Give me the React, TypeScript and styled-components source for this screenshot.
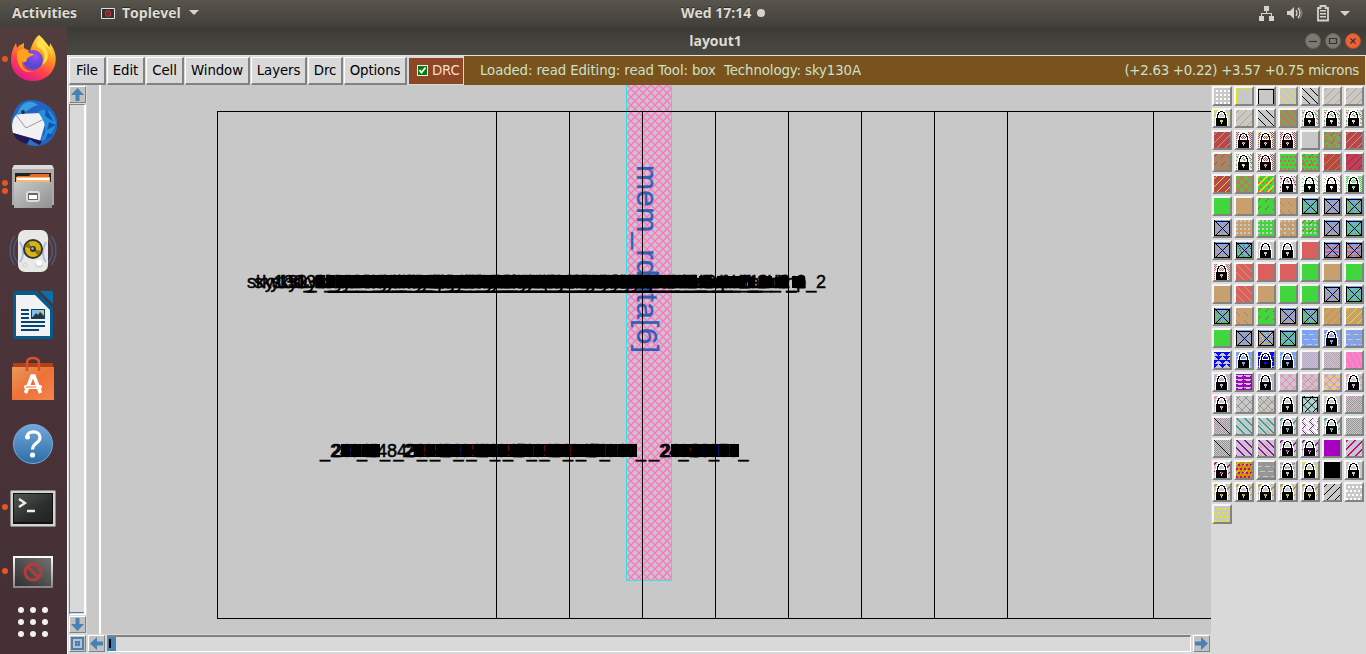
import React from "react";
import styled, { createGlobalStyle } from "styled-components";

const GlobalStyle = createGlobalStyle`
  * { box-sizing: border-box; }
  body { margin: 0; overflow: hidden; background: #d9d9d9; }
`;

const Desktop = styled.div`
  width: 1366px;
  height: 654px;
  display: flex;
  flex-direction: column;
  overflow: hidden;
  font-family: "DejaVu Sans", sans-serif;
`;

const TopBar = styled.header`
  height: 27px;
  flex: none;
  display: grid;
  grid-template-columns: 1fr auto 1fr;
  align-items: start;
  padding: 0 15px 0 12px;
  background: linear-gradient(#59554d, #403f3a);
  color: #dfdbd2;
  font: bold 14px/26px "Open Sans", sans-serif;
  text-shadow: 0 -1px 0 #2b2a27;
`;
const TopLeft = styled.div`
  display: flex;
  align-items: center;
  height: 26px;
`;
const BarText = styled.span<{ $w: number }>`
  width: ${(p) => p.$w}px;
  white-space: nowrap;
`;
const AppMark = styled.svg`
  margin: 0 7px 0 21px;
`;
const Clock = styled.div`
  display: flex;
  align-items: center;
  gap: 4px;
  height: 26px;
  margin-left: 83px;
`;
const ClockDot = styled.i`
  width: 8px;
  height: 8px;
  border-radius: 50%;
  background: #d5d2cc;
`;
const Tray = styled.div`
  display: flex;
  align-items: center;
  justify-content: flex-end;
  height: 26px;
`;

const Body = styled.div`
  flex: 1;
  display: flex;
  min-height: 0;
`;
const Dock = styled.nav`
  width: 67px;
  flex: none;
  display: flex;
  flex-direction: column;
  background: linear-gradient(#523c3e, #4b3439 50%, #432f34);
`;
const DockItem = styled.div<{ $h?: number }>`
  height: ${(p) => p.$h ?? 64}px;
  display: flex;
  align-items: center;
`;
const Marks = styled.span`
  width: 9px;
  display: flex;
  flex-direction: column;
  align-items: center;
  gap: 2px;
`;
const Mark = styled.i`
  width: 6px;
  height: 6px;
  border-radius: 50%;
  background: #e95420;
`;

const Win = styled.main`
  flex: 1;
  min-width: 0;
  display: flex;
  flex-direction: column;
  background: #d9d9d9;
`;
const TitleBar = styled.div`
  height: 28px;
  flex: none;
  display: grid;
  grid-template-columns: 1fr auto 1fr;
  align-items: start;
  padding: 0 5px 0 0;
  background: linear-gradient(#3b3a36, #4b4943);
  color: #dfdbd2;
  font: bold 14px/27px "Open Sans", sans-serif;
`;
const WinTitle = styled.span`
  grid-column: 2;
  margin-left: 3px;
`;
const WinButtons = styled.div`
  display: flex;
  justify-content: flex-end;
  gap: 4px;
  padding-top: 6px;
`;
const MenuRow = styled.div`
  height: 30px;
  flex: none;
  display: flex;
  border-top: 1px solid #e4e4e4;
  border-left: 1px solid #fff;
  padding: 0 1px;
  font-size: 13.33px;
`;
const MenuButton = styled.button<{ $w: number }>`
  width: ${(p) => p.$w}px;
  height: 28px;
  margin: 1px 1px 0 0;
  padding: 0;
  flex: none;
  background: #d9d9d9;
  border: 1px solid #fff;
  border-right: 2px solid #828282;
  border-bottom: 2px solid #828282;
  color: #000;
  font: 13.33px/24px "DejaVu Sans", sans-serif;
  letter-spacing: -0.1px;
  white-space: nowrap;
`;
const DrcToggle = styled.label`
  width: 56px;
  height: 28px;
  margin-top: 1px;
  flex: none;
  display: flex;
  align-items: center;
  gap: 4px;
  padding: 0 0 2px 8px;
  border: 1px solid #d9d9d9;
  background: #8e4726;
  color: #f5dcc8;
  letter-spacing: -0.2px;
`;
const Status = styled.div`
  flex: 1;
  display: flex;
  justify-content: space-between;
  align-items: center;
  padding: 0 6px 0 16px;
  background: #7a521e;
  color: #c9e2cd;
  white-space: pre;
`;
const Reading = styled.span<{ $track: number }>`
  letter-spacing: ${(p) => p.$track}px;
`;

const Work = styled.div`
  flex: 1;
  display: flex;
  min-height: 0;
`;
const Viewer = styled.section`
  width: 1144px;
  flex: none;
  display: flex;
  flex-direction: column;
  border-left: 1px solid #fff;
  background: #d9d9d9;
`;
const ViewerTop = styled.div`
  height: 549px;
  display: flex;
`;
const VScroll = styled.div`
  width: 19px;
  display: flex;
  flex-direction: column;
  padding: 1px 1px 1px 1px;
  gap: 1px;
`;
const ScrollButton = styled.span`
  width: 17px;
  height: 17px;
  flex: none;
  display: flex;
  align-items: center;
  justify-content: center;
  background: #c0c0c0;
  border: 1px solid #fff;
  border-right-color: #828282;
  border-bottom-color: #828282;
`;
const VTrough = styled.span`
  flex: 1;
  width: 17px;
  border: 1px solid #828282;
  border-right: 2px solid #fff;
  border-bottom: 1px solid #fff;
  display: flex;
  align-items: flex-end;
`;
const VThumb = styled.i`
  width: 14px;
  height: 1px;
  margin-bottom: 1px;
  background: #4682b4;
`;
const Gutter = styled.div`
  width: 14px;
  background: #c8c8c8;
  border-right: 2px solid #fff;
`;
const Drawing = styled.svg`
  width: 1110px;
  height: 549px;
  display: block;
  background: #c8c8c8;
`;
const HScroll = styled.div`
  height: 20px;
  display: flex;
  gap: 2px;
  padding: 1px;
`;
const HTrough = styled.span`
  flex: 1;
  height: 17px;
  display: flex;
  border: 1px solid #fff;
  border-top: 2px solid #828282;
  border-left: 1px solid #828282;
`;
const HThumb = styled.i`
  width: 8px;
  background: #4682b4;
  padding: 2px 0 3px 1px;
  &::before { content: ""; display: block; width: 2px; height: 9px; background: #000; }
`;

const Palette = styled.aside`
  flex: 1;
  display: grid;
  grid-template-columns: repeat(7, 20px);
  grid-auto-rows: 20px;
  gap: 2px;
  align-content: start;
  padding: 1px 0 0 1px;
`;
const Swatch = styled.span`
  border: 2px solid #f6f6f6;
  border-right: 2px solid #828282;
  border-bottom: 2px solid #828282;
  svg { display: block; }
`;

const C: Record<string, string> = {
  G: "#c8c8c8", W: "#ffffff", K: "#000000", Y: "#ebe60a", T: "#c8a070",
  N: "#a98463", g: "#42d63e", R: "#b8474d", r: "#dc5f5f", B: "#7ba4f8",
  D: "#0a0af0", P: "#a200c4", p: "#b9a0d6", k: "#ff78c8", M: "#cc0090",
  O: "#c89600", c: "#28a09c", a: "#969696", w: "#e2e2e2",
};

const lockMap = [
  "....WWWWWWW.....", "...WWWKKKWWW....", "...WKKWWWKKW....", "..WWKWW.WWKWW...",
  "..WKKW...WKKW...", "..WKW.....WKW...", "..WKW.....WKW...", ".WWKWWWWWWWKWW..",
  ".WKKKKKKKKKKKW..", ".WKKKKKKKKKKKW..", ".WKKKK...KKKKW..", ".WKKKK...KKKKW..",
  ".WKKKKK.KKKKKW..", ".WKKKKK.KKKKKW..", ".WKKKKKKKKKKKW..", ".WKKKKKKKKKKKW..",
];

function pixels(test: (x: number, y: number) => boolean) {
  let d = "";
  for (let y = 0; y < 16; y++)
    for (let x = 0; x < 16; x++) if (test(x, y)) d += `M${x} ${y}h1v1h-1z`;
  return d;
}

const stipples: Record<string, string> = {
  "\\": pixels((x, y) => (x - y + 16) % 8 === 0),
  "/": pixels((x, y) => (x + y) % 8 === 2),
  x: pixels((x, y) => (x + y) % 8 === 3 || (x - y + 16) % 8 === 0),
  s: pixels((x, y) => (x + y) % 8 === 2 && y % 8 < 4),
  t: pixels((x, y) => (x - y + 16) % 8 === 4 && y % 8 > 3),
  d: pixels((x, y) => x % 4 > 1 && y % 4 > 1),
  o: pixels((x, y) => (x + (y % 8 > 3 ? 2 : 0)) % 4 > 1 && y % 4 > 1),
  h: pixels((x, y) => (x + y) % 2 === 0),
  q: pixels((x, y) => (x % 4 < 2) !== (y % 4 < 2) && (x + y) % 2 === 0),
  D: pixels((x, y) => x % 4 < 2 && y % 4 < 2),
  u: pixels((x, y) => (x + y) % 8 === 1 || (x + y) % 16 === 2),
  w: pixels((x, y) => (y % 4 === 1 && x % 8 !== 7) || (y % 4 === 2 && x % 8 > 1 && x % 8 < 6)),
  b: pixels((x, y) => y % 5 !== 4 || (x + y) % 8 < 3),
  v: pixels((x, y) => Math.abs(((x + (y > 7 ? 4 : 0)) % 8) - 4) < 4 - (y % 4) || y % 8 === 0),
  f: pixels((x, y) => y === 1 || (x === 0 && y > 0) || (x === 15 && y > 0)),
  m: pixels((x, y) => x === y),
  e: pixels((x, y) => (x * 5 + y * 3) % 11 === 0),
  X: pixels((x, y) => y === 1 || y === 15 || ((x === 0 || x === 15) && y > 0) || x === y || x + y === 16),
  z: pixels((x, y) => (x - y + 16) % 8 < 2),
  Z: pixels((x, y) => (x + y) % 8 < 2),
};
const lockWhite = pixels((x, y) => lockMap[y][x] === "W");
const lockBlack = pixels((x, y) => lockMap[y][x] === "K");

/* Each swatch is a fill letter followed by stipple+colour pairs; a final L adds the padlock. */
const swatches = `
GdW GfY GfK G\\Y G\\K G/T G/T
GuYL G/T G\\K N\\g wqNegL wqNegL wqNegL
R/T whRL whReYL whRL G NxgsR R/T
NsR wqNegL whRL gor gorsR R/O R/M
R/Y NxgsO gorZY wqNeML WqgL WqTL whgL
g T gsR TtN BwgXK BwTXK BwgerXK
BwTXK TDG gDG TDGtN gDGsR BwTXK BwgXK
BwTXK BwgeMXK GL GL r BwrXK BwreTXK
whrL r\\T r r g T g
T r\\T T g g BwTXK BwgXK
BwgerXK TtN gsR BwTXK BwgerXK T/O T/Y
g BwTXK BwTeYXK BwgXK GbB GbBL GbB\\T
GvD GbBL GbDL GbBL Ghp Ghp\\T keG
GhpL PwG GhpL Gxk GxktT GoYxk GukL
GukL Gxa GxatT GL GzcfK/K GL Ghask
GhaskmK Gzc GzctT GucL WqGtPsP GucL Gha
GhamK GzP GzPtT GuPL GuPL PeM GZM
GuML OoMsG Gba GwaL GuYL K GL
GuOL GuOL GuOL GuOL GuOL G/K GoW
GoY`.trim().split(/\s+/);

function Tile({ spec }: { spec: string }) {
  const locked = spec.endsWith("L");
  const layers = (locked ? spec.slice(1, -1) : spec.slice(1)).match(/../g) ?? [];
  return (
    <Swatch>
      <svg width="16" height="16" shapeRendering="crispEdges">
        <rect width="16" height="16" fill={C[spec[0]]} />
        {layers.map((l, i) => <path key={i} d={stipples[l[0]]} fill={C[l[1]]} />)}
        {locked && <><path d={lockWhite} fill="#fff" /><path d={lockBlack} fill="#000" /></>}
      </svg>
    </Swatch>
  );
}

function Arrow({ turn }: { turn: number }) {
  return (
    <svg width="15" height="15" viewBox="0 0 15 15">
      <path d="M7.5 1L14 8H9.5V14H5.5V8H1z" fill="#4682b4" transform={`rotate(${turn} 7.5 7.5)`} />
    </svg>
  );
}

/* Cell labels: x, name, drawn length. Neighbouring instances print over each other. */
const cellLabels: [number, string, number][] = [
  [247, "fill_2", 196], [254, "decap_3", 212], [272, "nor2_2", 200], [291, "and2_1", 205],
  [318, "buf_2", 196], [326, "mux2_1", 205], [363, "dfxtp_1", 210], [369, "nand2_8", 213],
  [398, "buf_2", 196], [404, "mux2_1", 205], [432, "nand2_8", 213], [438, "buf_2", 196],
  [468, "dfxtp_1", 210], [474, "nor2_2", 200], [503, "nand2_8", 213], [509, "and2_1", 205],
  [540, "dfxtp_2", 210], [567, "nor2_2", 200], [572, "buf_2", 196], [584, "a21oi_2", 206],
  [595, "nand2_1", 211], [606, "buf_2", 200], [614, "dfrtp_2", 212],
];
const netStarts = [320, 357, 393.4, 430, 466.6, 503, 539.6, 576, 649, 678.5];
const columns = [496, 569, 642, 715, 788, 861, 934, 1007, 1153];

function Layout() {
  return (
    <Drawing viewBox="101 85 1110 549">
      <defs>
        <pattern id="via" x="627" y="85" width="8" height="8" patternUnits="userSpaceOnUse">
          <path d="M-1 -1L9 9M9 -1L-1 9" stroke="#ff74c6" strokeWidth="1.5" fill="none" />
        </pattern>
      </defs>
      <rect x="627" y="85" width="44" height="495" fill="url(#via)" />
      <path d="M626.5 85V580.5H671.5V85" stroke="#32e4e4" fill="none" shapeRendering="crispEdges" />
      <text transform="translate(637 165) rotate(90)" fontFamily="Liberation Sans, sans-serif" fontSize="30" fill="#2d5fb9" stroke="#2d5fb9" strokeWidth=".3" textLength="188">mem_rdata[6]</text>
      <g stroke="#000" fill="none" shapeRendering="crispEdges">
        <path d="M1212 111.5H217.5V618.5H1212" />
        {columns.map((x) => <path key={x} d={`M${x + 0.5} 111V618`} />)}
      </g>
      <path d="M316 275H325V288H316zM327 275H335V288H327zM337 275H697V288H337zM328 291H697V293H328zM699 276H708V288H699zM717 276H745V288H717zM748 277H755V288H748zM759 276H772V288H759zM775 277H789V288H775zM792 276H805V288H792z" />
      <path d="M341 444H380V457H341zM414 444H637V457H414zM671 444H739V457H671z" />
      <g shapeRendering="crispEdges" opacity=".75">
        {[350, 361, 460, 497, 533, 605, 617, 681, 702, 718].map((x) => <path key={x} d={`M${x}.5 445V456`} stroke="#1717a8" />)}
        {[424, 435, 472, 508, 544, 570, 690, 729].map((x) => <path key={x} d={`M${x}.5 445V456`} stroke="#8a1212" />)}
      </g>
      <g fontFamily="Liberation Sans, sans-serif" fontSize="18" fill="#000" stroke="#000" strokeWidth=".5">
        {cellLabels.map(([x, name, len]) => (
          <text key={x} x={x} y="288" textLength={len}>sky130_fd_sc_hd__{name}</text>
        ))}
        {netStarts.map((x, i) => (
          <React.Fragment key={x}>
            <text x={x} y="457">_{i === 1 ? 24843 : 24841 + i}_</text>
            {i !== 1 && <text x={x + 12} y="457">2</text>}
          </React.Fragment>
        ))}
      </g>
    </Drawing>
  );
}

const Firefox = () => (
  <svg width="48" height="48" viewBox="0 0 48 48">
    <defs>
      <linearGradient id="fx" x1=".8" y1="0" x2=".3" y2="1">
        <stop offset="0" stopColor="#fff44f" /><stop offset=".38" stopColor="#ff9a1e" />
        <stop offset=".7" stopColor="#ff4050" /><stop offset="1" stopColor="#e01590" />
      </linearGradient>
      <radialGradient id="fxg" cx=".6" cy=".3"><stop offset="0" stopColor="#a04ff0" /><stop offset="1" stopColor="#5548d8" /></radialGradient>
    </defs>
    <path d="M30 0c5 4 8 8 9 13 2-1 2-3 2-5 5 7 7 14 5 22C43 40 35 46 24 46 11 46 2 37 2 25 2 18 4 13 7 8l1 5c2-3 5-4 7-5v5c2 1 4 2 6 3 2-6 4-12 9-16z" fill="url(#fx)" />
    <circle cx="24" cy="25" r="10" fill="url(#fxg)" />
    <path d="M8 17c4-5 9-3 12 1l5 1c-2 3-6 2-7 5 0 4-4 4-5 2-1 7 6 12 12 10-9 4-18-3-17-19z" fill="#ffa01f" />
    <path d="M28 12c7 2 10 10 5 18 8-4 7-14 2-20 5 3 8 8 8 15 1-8-3-15-7-18l-5-5c-3 3-4 6-3 10z" fill="#ffe14a" />
  </svg>
);
const Thunderbird = () => (
  <svg width="48" height="48" viewBox="0 0 48 48">
    <circle cx="26" cy="25" r="22" fill="#2374cf" />
    <path d="M4 16C7 6 14 0 23 1c14 1 25 11 25 23 0 13-8 22-19 23 5-3 7-7 7-11L8 35C1 30 1 21 4 16z" fill="#2263c4" />
    <path d="M8 15L32 14 36 25 31 42 4 34C2 27 3 20 8 15z" fill="#f1f1f3" />
    <path d="M7 16l10 13 18-9" fill="none" stroke="#999" strokeWidth="1" />
    <path d="M8 15C12 4 20-1 29 6c-7 1-11 8-20 10z" fill="#379ddf" />
    <path d="M29 13c10-7 17 3 18 12-3 9-8 15-15 17 8-10 4-20-3-29z" fill="#248fdb" />
    <path d="M37 9l8 14-9-6zm3 14l7 3-9 5zm-1 11l5 2-8 5z" fill="#1554b0" />
    <path d="M4 34l29 8-2 4c-4-2-7-3-10-6l-3 5C10 43 6 39 4 34z" fill="#241755" />
    <circle cx="14" cy="13" r="2" fill="#234" />
  </svg>
);
const Files = () => (
  <svg width="48" height="48" viewBox="0 0 48 48">
    <defs><linearGradient id="fl" x2="1" y2="1"><stop stopColor="#c9c9c9" /><stop offset="1" stopColor="#909090" /></linearGradient></defs>
    <path d="M5 2h38l2 4v36H3V6z" fill="#aaa" /><path d="M5 2h38l2 4H3z" fill="#dedada" />
    <path d="M6 10h36v10H6z" fill="#24201f" />
    <path d="M8 13h12l2-2h18v3H8z" fill="#ed6b29" /><path d="M7 14h34v5H7z" fill="#f6b875" /><path d="M8 15h32v2H8z" fill="#fff" />
    <path d="M5 19h38v26H5z" fill="url(#fl)" />
    <rect x="17" y="28" width="14" height="11" rx="3" fill="#ddd" /><rect x="19" y="30" width="10" height="7" fill="#686868" /><rect x="20" y="32" width="8" height="4" fill="#fff" />
  </svg>
);
const Speaker = () => (
  <svg width="48" height="48" viewBox="0 0 48 48">
    <g fill="none" stroke="#536585" strokeWidth="1.5" opacity=".75">
      <path d="M6 9C-1 17 0 31 6 38M42 9c7 8 6 22 0 29M10 10C3 18 3 30 10 37M38 10c7 8 7 20 0 27" />
    </g>
    <rect x="9" y="3" width="30" height="42" rx="7" fill="#e8e8e6" />
    <path d="M11 15c4 7 4 15 0 20M37 15c-4 7-4 15 0 20" stroke="#aebfda" strokeWidth="2" fill="none" />
    <circle cx="24" cy="22" r="10" fill="#333" /><circle cx="24" cy="22" r="8" fill="#d4b418" />
    <path d="M24 22l-8-2 3-5zM24 22l8 2-3 5z" fill="#8c7410" /><circle cx="24" cy="22" r="3" fill="#333" /><circle cx="23.5" cy="21.5" r="1.2" fill="#bbb" />
    <circle cx="30" cy="37" r="3.5" fill="#c9c9c7" /><circle cx="30" cy="36" r="3" fill="#fff" /><circle cx="16" cy="38" r="2" fill="none" stroke="#d2d2d0" />
  </svg>
);
const Writer = () => (
  <svg width="48" height="48" viewBox="0 0 48 48">
    <path d="M6 0h22l16 16v30q0 2-2 2H6q-2 0-2-2V2q0-2 2-2z" fill="#045b8d" />
    <path d="M7 4h19l15 15v26H7z" fill="#f2f2f2" /><path d="M31 0h13v13z" fill="#0a6fa9" /><path d="M29 1l15 15" stroke="#4b3439" />
    <path d="M12 19h8M12 23h8M12 27h8M12 31h24M12 35h24M12 39h18" stroke="#034674" strokeWidth="2" />
    <rect x="22" y="18" width="14" height="10" fill="#034674" /><path d="M23 19h12v7H23z" fill="#7dc2ef" /><path d="M23 27l4-5 2 2 2-3 4 4v2z" fill="#333" /><path d="M31 19h4v4z" fill="#efc72b" />
  </svg>
);
const Software = () => (
  <svg width="48" height="48" viewBox="0 0 48 48">
    <defs><linearGradient id="sw" x2="1" y2="1"><stop stopColor="#e79b5b" /><stop offset=".5" stopColor="#ee7237" /><stop offset="1" stopColor="#f1854d" /></linearGradient></defs>
    <path d="M4 8h40v5H4z" fill="#b34016" /><path d="M3 12h42v33H3z" fill="url(#sw)" />
    <path d="M18 16V8q0-5 6-5t6 5v8" fill="none" stroke="#d9512a" strokeWidth="2.5" />
    <path d="M16.5 38l6.500-17h2l6.500 17" fill="none" stroke="#fff" strokeWidth="3.6" />
    <rect x="15" y="30" width="18" height="4" rx="2" fill="#fff" /><path d="M17 32h10" stroke="#ee6a30" />
  </svg>
);
const Help = () => (
  <svg width="48" height="48" viewBox="0 0 48 48">
    <defs><linearGradient id="hp" x2="0" y2="1"><stop stopColor="#74a7dc" /><stop offset="1" stopColor="#2a6ea7" /></linearGradient></defs>
    <circle cx="24" cy="25" r="19.5" fill="url(#hp)" stroke="#7badd6" />
    <path d="M18 18c0-7 13-7 13 .5 0 6-7.5 5-7.5 12" fill="none" stroke="#fff" strokeWidth="3.2" /><circle cx="18.5" cy="18" r="2.5" fill="#fff" /><circle cx="23.5" cy="36" r="2.6" fill="#fff" />
  </svg>
);
const Terminal = () => (
  <svg width="48" height="48" viewBox="0 0 48 48">
    <defs><linearGradient id="tm" x2="1" y2="1"><stop stopColor="#555753" /><stop offset=".6" stopColor="#2b2d2c" /><stop offset="1" stopColor="#222" /></linearGradient></defs>
    <rect x="1.5" y="7.5" width="45" height="36" rx="1" fill="#d3d3cf" stroke="#8a8a88" /><rect x="4" y="10" width="40" height="31" fill="#111" /><rect x="5" y="11" width="38" height="28" fill="url(#tm)" />
    <path d="M10 16l6 4-6 4M18 28h8" fill="none" stroke="#eee" strokeWidth="2.3" />
  </svg>
);
const Toplevel = () => (
  <svg width="48" height="48" viewBox="0 0 48 48">
    <defs>
      <linearGradient id="tl" x2="0" y2="1"><stop stopColor="#fff" /><stop offset="1" stopColor="#8b8284" /></linearGradient>
      <linearGradient id="ts" x1="1" y1="0" x2="0" y2="1"><stop stopColor="#707070" /><stop offset="1" stopColor="#303030" /></linearGradient>
    </defs>
    <rect x="4" y="9" width="40" height="32" fill="url(#tl)" /><rect x="6" y="11" width="36" height="28" fill="url(#ts)" />
    <g fill="none" stroke="#b63a3c" strokeWidth="3"><circle cx="24" cy="25" r="8" /><path d="M18 19l12 12" /></g>
  </svg>
);
const AppGrid = () => (
  <svg width="48" height="36" viewBox="0 0 48 36">
    {[6, 18, 30].map((y) => [12, 24, 36].map((x) => <circle key={`${x}-${y}`} cx={x} cy={y} r="3" fill="#f2f1f0" />))}
  </svg>
);

const launchers: [React.ComponentType, number][] = [
  [Firefox, 1], [Thunderbird, 0], [Files, 2], [Speaker, 0], [Writer, 0],
  [Software, 0], [Help, 0], [Terminal, 1], [Toplevel, 1],
];
const menus: [string, number][] = [
  ["File", 37], ["Edit", 38], ["Cell", 38], ["Window", 65], ["Layers", 56], ["Drc", 35], ["Options", 63],
];

function WindowButton({ kind }: { kind: "min" | "max" | "close" }) {
  const close = kind === "close";
  return (
    <svg width="16" height="16" viewBox="0 0 16 16">
      <circle cx="8" cy="8" r="7.5" fill={close ? "#ec6236" : "#7b7970"} stroke={close ? "#bd4f2c" : "#65635c"} />
      <path d={kind === "min" ? "M4 8.5h8" : kind === "max" ? "M4.5 5.5h7v5h-7z" : "M5.5 5.5l5 5m0-5l-5 5"} fill="none" stroke="#36342f" strokeWidth="1.2" />
    </svg>
  );
}

export default function App() {
  return (
    <Desktop>
      <GlobalStyle />
      <TopBar>
        <TopLeft>
          <BarText $w={68}>Activities</BarText>
          <AppMark width="14" height="11" viewBox="0 0 14 11">
            <path d="M.5.5h13v10H.5z" fill="#333" stroke="#dedede" />
            <circle cx="7" cy="5.5" r="2.6" fill="none" stroke="#c93036" strokeWidth="1.2" /><path d="M5 3.5l4 4" stroke="#c93036" />
          </AppMark>
          <BarText $w={67}>Toplevel</BarText>
          <svg width="10" height="6"><path d="M0 0h10L5 5z" fill="#d5d2cc" /></svg>
        </TopLeft>
        <Clock><BarText $w={72}>Wed 17:14</BarText><ClockDot /></Clock>
        <Tray>
          <svg width="92" height="18" viewBox="0 0 92 18" fill="#d5d2cc">
            <path d="M5 2h5v5H8v2h5v3h2v5h-5v-5h2v-2H3v2h2v5H0v-5h2V9h5V7H5z" />
            <path d="M28 7h3l4-4v12l-4-4h-3z" /><path d="M37 6q2 3 0 6M39 4q4 5 0 10" fill="none" stroke="#d5d2cc" strokeWidth="1.3" /><path d="M40.5 3q5 6 0 12" fill="none" stroke="#88857e" />
            <path d="M61.5 2v2H59v12.5h10V4H66.500V2z" fill="none" stroke="#d5d2cc" strokeWidth="1.8" /><path d="M61 6h6v1.500h-6zm0 3h6v1.500h-6zm0 3h6v1.500h-6z" />
            <path d="M81 7h10l-5 5z" />
          </svg>
        </Tray>
      </TopBar>
      <Body>
        <Dock>
          {launchers.map(([Icon, n], i) => (
            <DockItem key={i}>
              <Marks>{Array.from({ length: n }, (_, k) => <Mark key={k} />)}</Marks>
              <Icon />
            </DockItem>
          ))}
          <DockItem $h={38}><Marks /><AppGrid /></DockItem>
        </Dock>
        <Win>
          <TitleBar>
            <WinTitle>layout1</WinTitle>
            <WinButtons><WindowButton kind="min" /><WindowButton kind="max" /><WindowButton kind="close" /></WinButtons>
          </TitleBar>
          <MenuRow>
            {menus.map(([label, w]) => <MenuButton key={label} $w={w}>{label}</MenuButton>)}
            <DrcToggle>
              <svg width="11" height="11" viewBox="0 0 11 11"><path d="M0 0h11v11H0z" fill="#eee" /><path d="M1 1h9v9H1z" fill="#087c13" /><path d="M2.5 5l2 2.500 4-5" fill="none" stroke="#fff" strokeWidth="1.8" /></svg>
              DRC
            </DrcToggle>
            <Status>
              <Reading $track={-0.11}>Loaded: read Editing: read Tool: box  Technology: sky130A</Reading>
              <Reading $track={-0.27}>(+2.63 +0.22) +3.57 +0.75 microns</Reading>
            </Status>
          </MenuRow>
          <Work>
            <Viewer>
              <ViewerTop>
                <VScroll>
                  <ScrollButton><Arrow turn={0} /></ScrollButton>
                  <VTrough><VThumb /></VTrough>
                  <ScrollButton><Arrow turn={180} /></ScrollButton>
                </VScroll>
                <Gutter />
                <Layout />
              </ViewerTop>
              <HScroll>
                <ScrollButton>
                  <svg width="15" height="15" fill="none" stroke="#4682b4" strokeWidth="2"><path d="M2 2h11v11H2zM6 6h3v3H6z" /></svg>
                </ScrollButton>
                <ScrollButton><Arrow turn={-90} /></ScrollButton>
                <HTrough><HThumb /></HTrough>
                <ScrollButton><Arrow turn={90} /></ScrollButton>
              </HScroll>
            </Viewer>
            <Palette>{swatches.map((s, i) => <Tile key={i} spec={s} />)}</Palette>
          </Work>
        </Win>
      </Body>
    </Desktop>
  );
}
